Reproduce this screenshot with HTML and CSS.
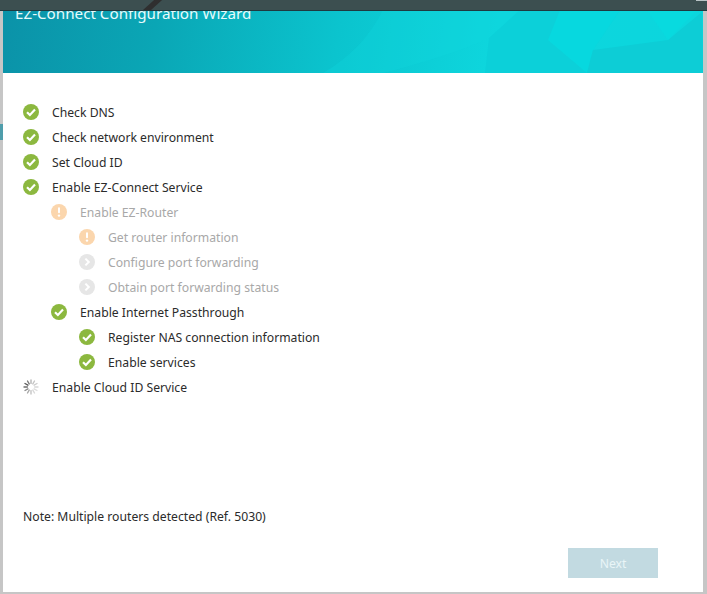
FILE: index.html
```html
<!DOCTYPE html>
<html lang="en">
<head>
<meta charset="utf-8">
<title>EZ-Connect Configuration Wizard</title>
<link rel="stylesheet" href="styles.css">
</head>
<body>
<svg width="0" height="0" class="defs" aria-hidden="true">
  <symbol id="ok" viewBox="0 0 16 16">
    <circle cx="8" cy="8" r="8" fill="#8cb83f"/>
    <path d="M4 8.2l2.9 2.8L12 5.6" fill="none" stroke="#fff" stroke-width="2.2"/>
  </symbol>
  <symbol id="warn" viewBox="0 0 16 16">
    <circle cx="8" cy="8" r="8" fill="#fbd6ad"/>
    <rect x="7" y="3.2" width="2" height="6" rx="1" fill="#fff"/>
    <circle cx="8" cy="11.6" r="1.2" fill="#fff"/>
  </symbol>
  <symbol id="todo" viewBox="0 0 16 16">
    <circle cx="8" cy="8" r="8" fill="#e6e6e6"/>
    <path d="M6.4 4.6L9.8 8l-3.4 3.4" fill="none" stroke="#fff" stroke-width="2"/>
  </symbol>
</svg>
<span class="backdrop-tab"></span>
<div class="topbar"><span class="topbar-streak"></span><span class="topbar-glint"></span></div>
<main class="dialog">
  <header class="banner">
    <svg class="banner-art" viewBox="0 0 700 63" preserveAspectRatio="none" aria-hidden="true">
      <path d="M380 63 Q450 45 486 28 L517 0 L380 0 Q360 40 320 63Z" fill="#0fd8de" opacity=".3"/>
      <polygon points="517,0 486,28 482,63 584,63 590,40 617,0" fill="#0cd0d9"/>
      <polygon points="557,0 617,0 590,40 584,63 545,30" fill="#05dde2" opacity=".6"/>
      <polygon points="590,40 665,30 699,2 700,63 584,63" fill="#0dcdd6"/>
      <polygon points="644,0 694,0 665,30" fill="#08dbe0" opacity=".8"/>
    </svg>
    <h1 class="title">EZ-Connect Configuration Wizard</h1>
  </header>
  <section class="content">
    <ul class="steps">
      <li class="step"><svg class="icon"><use href="#ok"/></svg>Check DNS</li>
      <li class="step"><svg class="icon"><use href="#ok"/></svg>Check network environment</li>
      <li class="step"><svg class="icon"><use href="#ok"/></svg>Set Cloud ID</li>
      <li class="step"><svg class="icon"><use href="#ok"/></svg>Enable EZ-Connect Service</li>
      <li class="step lvl1 muted"><svg class="icon"><use href="#warn"/></svg>Enable EZ-Router</li>
      <li class="step lvl2 muted"><svg class="icon"><use href="#warn"/></svg>Get router information</li>
      <li class="step lvl2 muted"><svg class="icon"><use href="#todo"/></svg>Configure port forwarding</li>
      <li class="step lvl2 muted"><svg class="icon"><use href="#todo"/></svg>Obtain port forwarding status</li>
      <li class="step lvl1"><svg class="icon"><use href="#ok"/></svg>Enable Internet Passthrough</li>
      <li class="step lvl2"><svg class="icon"><use href="#ok"/></svg>Register NAS connection information</li>
      <li class="step lvl2"><svg class="icon"><use href="#ok"/></svg>Enable services</li>
      <li class="step">
        <svg class="icon" viewBox="0 0 16 16">
          <g fill="none" stroke-width="1.4" stroke-linecap="round">
            <path d="M8 1v3.4" stroke="#b5b5b5"/>
            <path d="M11.5 2l-1.7 2.9" stroke="#c4c4c4"/>
            <path d="M14 4.5l-2.9 1.7" stroke="#cfcfcf"/>
            <path d="M15 8h-3.4" stroke="#d8d8d8"/>
            <path d="M14 11.5l-2.9-1.7" stroke="#dedede"/>
            <path d="M11.5 14l-1.7-2.9" stroke="#d8d8d8"/>
            <path d="M8 15v-3.4" stroke="#c4c4c4"/>
            <path d="M4.5 14l1.7-2.9" stroke="#a8a8a8"/>
            <path d="M2 11.5l2.9-1.7" stroke="#8c8c8c"/>
            <path d="M1 8h3.4" stroke="#6e6e6e"/>
            <path d="M2 4.5l2.9 1.7" stroke="#5a5a5a"/>
            <path d="M4.5 2l1.7 2.9" stroke="#7a7a7a"/>
          </g>
        </svg>Enable Cloud ID Service
      </li>
    </ul>
    <p class="note">Note: Multiple routers detected (Ref. 5030)</p>
    <div class="actions"><button class="next" type="button" disabled>Next</button></div>
  </section>
</main>
</body>
</html>
```
FILE: styles.css
```css
* { box-sizing: border-box; }
html, body { height: 100%; }
body {
  margin: 0;
  background: #c6c6c6;
  font-family: "Noto Sans", "Open Sans", "Liberation Sans", sans-serif;
  font-size: 12.2px;
  color: #2b2b2b;
  overflow: hidden;
  position: relative;
}
.defs { position: absolute; }
.backdrop-tab {
  position: absolute;
  top: 124px;
  left: 0;
  width: 3px;
  height: 16px;
  background: #4f9dab;
}
.topbar {
  position: absolute;
  z-index: 2;
  top: 0;
  left: 0;
  right: 0;
  height: 11px;
  background: #3c4f50;
  border-bottom: 1px solid #1f3a40;
  overflow: hidden;
}
.topbar-streak {
  position: absolute;
  top: 0;
  left: 148px;
  width: 8px;
  height: 11px;
  background: #2f2f2f;
  transform: skewX(-48deg);
}
.topbar-glint {
  position: absolute;
  top: 0;
  right: 0;
  width: 11px;
  height: 1px;
  background: #b9c4c6;
}
.dialog {
  position: relative;
  display: flex;
  flex-direction: column;
  height: 592px;
  margin: 0 4px 0 3px;
  background: #fff;
}
.banner {
  position: relative;
  flex: none;
  height: 73px;
  padding: 2px 12px 0;
  overflow: hidden;
  background: linear-gradient(100deg, #0b92a8 0%, #0aa6b5 22%, #0bc4ce 48%, #0ed6dd 70%, #0bd6dd 100%);
}
.banner-art {
  position: absolute;
  left: 0;
  top: 10px;
  width: 100%;
  height: 63px;
}
.title {
  position: relative;
  margin: 0;
  font-size: 15.2px;
  font-weight: 400;
  line-height: 22px;
  color: #e6fbfc;
}
.content {
  flex: 1;
  display: flex;
  flex-direction: column;
  padding: 27px 45px 14px 20px;
}
.steps {
  list-style: none;
  margin: 0;
  padding: 0;
}
.step {
  display: flex;
  align-items: center;
  height: 25px;
}
.icon {
  flex: none;
  width: 16px;
  height: 16px;
  margin-right: 13px;
  position: relative;
  top: -1px;
}
.lvl1 { padding-left: 28px; }
.lvl2 { padding-left: 56px; }
.muted { color: #a8a8a8; }
.note {
  margin: auto 0 0;
  line-height: 18px;
}
.actions {
  display: flex;
  justify-content: flex-end;
  margin-top: 22px;
}
.next {
  width: 90px;
  height: 30px;
  border: 0;
  background: #c2dae1;
  color: #e9f5f7;
  font: inherit;
}
```
